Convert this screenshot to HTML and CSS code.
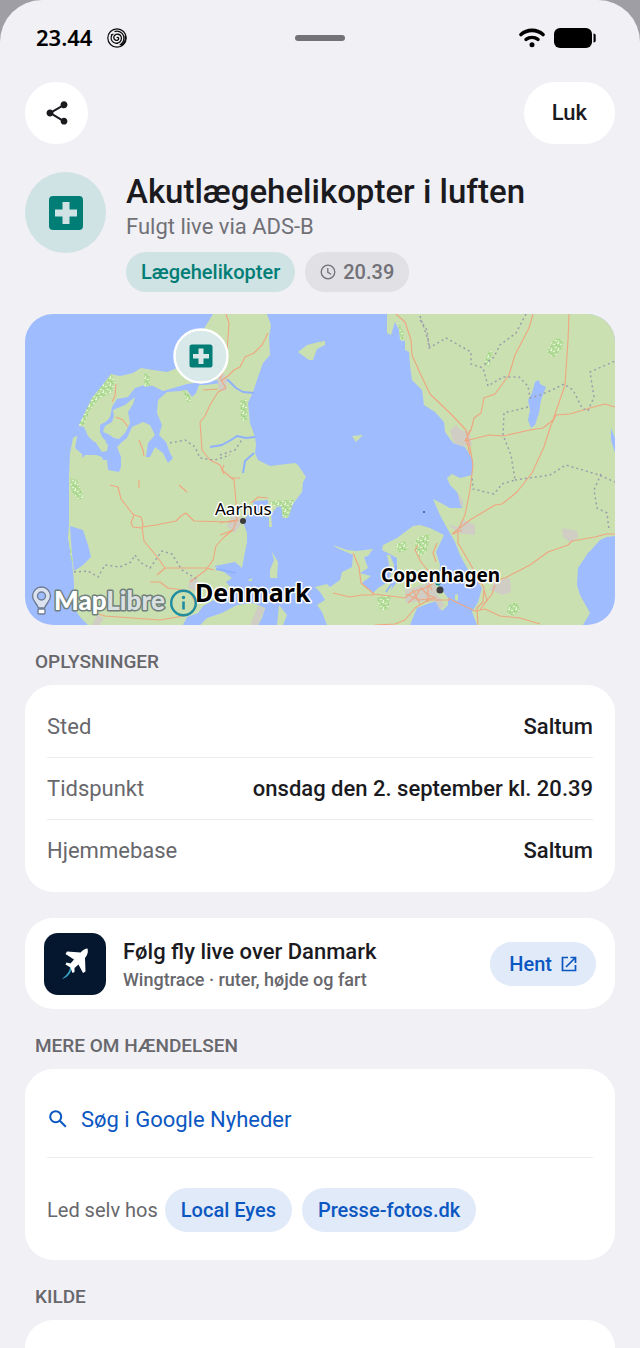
FILE: index.html
```html
<!DOCTYPE html>
<html lang="da">
<head>
<meta charset="utf-8">
<meta name="viewport" content="width=device-width, initial-scale=1">
<title>Akutlægehelikopter i luften</title>
<link rel="stylesheet" href="styles.css">
</head>
<body>
<div class="sheet">
  <div class="status">
    <div class="status-left">
      <span class="clock">23.44</span>
      <svg class="swirl" viewBox="0 0 20 20" fill="none" stroke="#0b0b0b" aria-hidden="true">
        <circle cx="10" cy="10" r="9.2" stroke-width="1.2"/>
        <path d="M10 10c.2-1 1.600-.8 1.700.4.1 1.600-1.700 2.500-3.200 1.800-2-.9-2.300-3.500-.7-5C9.600 5.500 12.900 6 14 8.300c1.200 2.700-.1 5.800-3 6.700-3.200.9-6.100-.9-6.800-3.800-.4-2-.1-3.300.9-4.700M4 7l2.500-1M7.500 3.600c3.700-1.200 7.700.4 9 3.900 1.400 3.800-.2 7.900-3.800 9.500" stroke-width="1.3"/>
        <path d="M18.300 7.500c.8 4-1 8.200-4.500 10" stroke-width="1.600"/>
      </svg>
    </div>
    <div class="handle"></div>
    <div class="status-right">
      <svg class="wifi" viewBox="0 0 26 20" fill="none" stroke="#000" stroke-linecap="round" aria-hidden="true">
        <path d="M2 6.500C8.200 1 17.800 1 24 6.500" stroke-width="3.600"/>
        <path d="M7 11.400c3.400-2.700 8.600-2.700 12 0" stroke-width="3.400"/>
        <circle cx="13" cy="16.800" r="2.500" fill="#000" stroke="none"/>
      </svg>
      <svg class="battery" viewBox="0 0 42 20" aria-hidden="true"><rect width="38" height="20" rx="6"/><path d="M39.500 5.500c1.500 0 2.200.8 2.200 2v5c0 1.200-.7 2-2.200 2z"/></svg>
    </div>
  </div>

  <div class="actions">
    <button class="round-btn share" aria-label="Del">
      <svg viewBox="0 0 24 24" fill="#1b1b1f"><path d="M18 16.080c-.76 0-1.440.3-1.960.77L8.910 12.700c.05-.23.09-.46.09-.7s-.04-.47-.09-.7l7.050-4.110c.54.5 1.250.81 2.040.81 1.660 0 3-1.340 3-3s-1.340-3-3-3-3 1.340-3 3c0 .24.04.47.09.7L8.040 9.810C7.500 9.310 6.790 9 6 9c-1.660 0-3 1.340-3 3s1.340 3 3 3c.79 0 1.500-.31 2.040-.81l7.120 4.160c-.05.21-.08.43-.08.65 0 1.610 1.310 2.920 2.920 2.920s2.920-1.310 2.920-2.920-1.310-2.920-2.920-2.920z"/></svg>
    </button>
    <button class="round-btn close">Luk</button>
  </div>

  <header class="head">
    <div class="head-icon">
      <svg viewBox="0 0 34 34" aria-hidden="true"><path fill="#007d75" fill-rule="evenodd" d="M4 0h26a4 4 0 0 1 4 4v26a4 4 0 0 1-4 4H4a4 4 0 0 1-4-4V4a4 4 0 0 1 4-4zM13.500 6v7.500H6v7h7.500V28h7v-7.500H28v-7h-7.500V6z"/></svg>
    </div>
    <div class="head-text">
      <h1>Akutlægehelikopter i luften</h1>
      <p class="sub">Fulgt live via ADS-B</p>
      <div class="tags">
        <span class="tag teal">Lægehelikopter</span>
        <span class="tag grey">
          <svg viewBox="0 0 16 16" fill="none" stroke="#707076" stroke-width="1.300" aria-hidden="true"><circle cx="8" cy="8" r="6.800"/><path d="M7.800 4v4.300l3.300 2"/></svg>20.39</span>
      </div>
    </div>
  </header>

  <div class="map">
    <svg viewBox="25 314 590 311" preserveAspectRatio="xMidYMid slice" role="img" aria-label="Kort over Danmark">
      <defs>
        <pattern id="wood" width="7" height="7" patternUnits="userSpaceOnUse">
          <rect width="7" height="7" fill="#b7dd9d"/>
          <path d="M0 1h2v1H0zM4 0h2v1H4zM2 4h2v1H2zM5 5h1v2H5z" fill="#e4f5d5"/><path d="M3 1h1v2H3zM0 5h1v1H0zM5 3h2v1H5z" fill="#9ad481"/>
        </pattern>
      </defs>
      <rect x="25" y="314" width="590" height="311" fill="#9fbcff"/>
      <g fill="#cbe0b0">
        <path d="M213 314L205 327 190 350 175 369 167 372 153 370 141 368 133 373 120 376 111 374 105 382 92 398 79 425 78 435 73 438 70 453 69 475 69 525 68 538 72 562 73 572 74 582 74 608 80 617 88 625H183L187 617 198 613 203 606 214 600 226 596 231 588 226 582 232 578 224 572 214 566 220 565 235 562 242 568 245 552 247 542 247 533 243 522 252 508 254 501 268 500 269 515 269 527 272 527 271 514 277 507 282 506 283 518 288 518 290 508 302 492 303 482 306 477 298 465 295 463 270 466 258 460 255 453 256 445 255 437 250 423 248 403 253 392 258 377 263 363 270 355 269 337 271 325 267 314Z"/>
        <path d="M207 618L222 613 237 605 253 603 265 608 262 618 258 625H200ZM279 605L287 615 283 625H277ZM270 545L272 552 278 562 277 578 270 578 270 570 274 560ZM247 581L252 578V581Z"/>
        <path d="M315 587L327 584 330 587 340 580 342 572 352 567 353 555 337 548 333 545 347 550 357 551 373 549 368 556 364 557 368 568 360 573 371 576 362 583 373 593 378 588 388 582 391 574 387 555 390 555 394 565 393 580 391 590 397 582 397 570 397 558 382 550 383 545 397 538 413 526 420 525 430 528 444 535 436 552 440 565 438 585 448 598 448 605 442 611 437 601 430 603 417 608 410 625H327L322 612 317 605 325 600 320 592Z"/>
        <path d="M387 314L387 333 391 335 395 322 399 330 400 340 405 341 405 350 409 352 410 365 412 380 422 390 424 405 435 412 444 422 445 432 453 443 465 447 473 460 472 475 460 478 452 474 447 478 450 485 457 492 463 502 462 508 450 508 437 501 433 499 440 515 447 528 455 542 460 555 467 568 475 577 482 588 478 602 472 612 477 625H583L590 613 580 595 577 585 578 568 588 553 592 549 600 540 607 537 615 536V314Z"/>
        <path d="M298 352L307 345 319 342 325 341 325 345 317 349 313 360 309 360ZM352 436L363 435 356 442ZM455 595L458 594 458 601 455 600Z"/>
      </g>
      <g fill="#9fbcff">
        <path d="M79 426L84 427 88 436 94 442 101 440 107 442 102 437 100 432 100 425 107 421 110 417 112 407 117 399 128 397 135 388 145 385 153 386 163 391 187 384 195 383 205 381 222 380 222 383 205 385 199 385 196 393 192 397 187 390 180 391 167 392 158 400 157 413 162 425 159 435 166 442 170 453 173 458 168 463 163 453 155 447 150 457 146 457 148 443 155 435 150 425 143 422 132 427 127 438 122 442 117 447 121 457 121 467 119 472 108 470 107 460 103 460 102 457 96 455 85 455 83 458 82 454 75 448Z"/>
        <path d="M70 526L83 530 88 545 91 557 83 565 74 571 72 555Z"/>
        <path d="M535 382L539 380 540 384 546 387 544 392 541 400 539 413 535 425 531 428 528 420 530 410 528 400 532 393ZM611 428L615 438V453L611 440ZM372 560L377 558 378 568 382 575 378 585 374 580 372 570Z"/>
      </g>
      <path fill="#cbe0b0" d="M113 410L125 405 135 397 133 404 128 412 130 423 125 433 119 439 114 438 108 434 103 432 105 426 112 422 114 416ZM94 440L102 438 108 445 107 451 102 452Z"/>
      <g fill="none" stroke="#8fb1fb" stroke-width="2" stroke-linejoin="round">
        <path d="M220 381L228 380 236 388 243 392 254 393M210 447L222 445 231 440 237 436 246 438 255 437M254 453L245 461 243 473M216 569L236 573"/>
        <path d="M386 592L394 580 396 566" stroke-width="1.500"/>
      </g>
      <g fill="#cfcdc4">
        <path d="M217 376L224 374 227 380 226 391 219 390ZM450 430L456 425 461 430 469 432 472 445 461 446 453 442ZM232 515L243 518 240 526 234 533 227 526ZM562 528L577 531 578 537 571 543 563 537ZM448 524L458 527 463 520 475 525 475 535 458 533ZM405 590L423 585 436 580 437 594 445 605 440 610 435 600 415 602 406 603ZM495 580L510 578 511 592 503 595 490 590ZM190 578L198 580 198 592 188 588ZM97 615L104 618 99 625H92ZM258 606L265 609 258 625H250ZM457 491L463 502 461 508Z"/>
      </g>
      <g fill="url(#wood)">
        <path d="M111 374L115 382 112 392 100 398 90 410 84 425 79 425 92 398 105 382ZM144 373L150 376 150 386 144 387ZM182 389L190 395 191 402 187 402ZM240 401L247 399 248 420 241 421ZM399 322L404 334 402 342 399 332ZM557 338L564 341 562 348 554 358 547 352 552 342ZM489 350L493 352 489 367 484 364ZM70 478L77 480 84 498 78 500 71 490ZM270 501L294 500 289 516 283 518 281 506 271 506ZM395 545L405 541 408 549 400 553ZM417 538L430 534 427 552 419 557 414 548ZM377 597L391 596 388 610 380 610ZM508 606L516 602 520 609 514 616 507 613ZM68 530L70 545 73 562 71 560Z"/>
      </g>
      <g fill="none" stroke="#eea680" stroke-width="1.100" stroke-linejoin="round">
        <path d="M226 314L229 323 228 338 227 350 226 366 220 378 226 388 218 392 210 405 205 416 200 422 202 450 210 460 220 465 224 474M268 333L262 345 254 353 245 357 240 367 234 370 228 376 221 381M203 390L218 389M116 384L115 396 112 402M116 417L123 420 128 427M139 440L143 450 144 456"/>
        <path d="M110 485L118 487 121 499 132 513 134 515 141 517 143 524 142 528 133 527 131 523 134 515M142 527L144 541 158 558 165 568H206L214 570M142 527L156 525 176 521 181 516 186 513 194 521 230 522 239 520M139 480V488M179 485L187 492M165 568L157 575M150 582L160 582 168 588 190 591 196 605 189 615 160 620 105 616 95 613M190 582L206 570 213 560 216 546 224 537 233 530M224 465L222 470 234 480 236 502 237 518 233 530 220 535M251 503L258 497 268 498M220 523L236 520M230 478L240 478"/>
        <path d="M353 553L359 567 361 583 374 594 398 597 405 598M333 593L350 597 362 595 374 595M375 625L395 624 405 620 415 608 428 600 450 600M418 545L415 550 421 562 430 573M437 543L433 553 436 562M405 598L412 592 425 588 434 583M408 603L416 596 421 588 428 595 436 598 419 600 406 594M413 590L420 604M428 585V602M425 575L432 590"/>
        <path d="M396 314L405 322 411 340 412 355 420 373 430 394 452 415 466 430 470 447 473 465 470 490 465 515 458 530 458 543 468 560 484 588 483 602 477 608 478 625M533 314L529 328 515 355 509 375 495 394 484 398 481 413 474 418 471 430 465 441 489 435 503 436 530 430 543 428 553 420 565 385 568 340 569 314M452 534L470 520 495 505 502 504 517 492 532 473 544 447 551 425 556 415 570 414 590 408 605 404 615 407M448 598L460 604 475 611 485 609 500 616 520 618 540 624M478 583L505 578 530 565 548 552 568 545 572 541 595 537 606 534 615 534M480 610L487 600 484 590M466 440L470 430M466 438L470 455M453 534L462 530M495 585L492 594 483 606"/>
      </g>
      <g fill="none" stroke="#9a9eab" stroke-width="1.500" stroke-dasharray="2 3">
        <path d="M420 320L427 330 429 348 446 338 471 352 471 364 483 368 488 386 503 377 519 377 528 386 530 398 540 395 552 390 564 384 573 390 582 408 588 411 594 397 590 372 606 365 615 361M526 314L516 333 500 345 494 357 484 365M528 407L504 413 503 435 511 455 515 480 502 484 494 494 473 489 472 477M515 480L550 475 566 465 599 475 615 482M601 474L594 490 597 508 607 513 609 530M420 316L428 340 430 348M170 443L185 440 195 447 200 458 215 460 230 455M220 455L235 450 243 438M74 572L88 571 98 577 105 565 120 567 131 562 135 555 140 562 150 568 162 551 172 554 182 570 198 580"/>
      </g>
      <circle cx="424" cy="512" r="1" fill="#39538c"/>
      <circle cx="438" cy="583" r="2.500" fill="#0d8c80"/>
      <circle cx="243" cy="521" r="3" fill="#3c3c3c"/>
      <circle cx="440" cy="590" r="3.500" fill="#3c3c3c"/>
      <g class="place">
        <text x="215" y="515" font-size="17">Aarhus</text>
        <text x="381" y="582" font-size="19" font-weight="700">Copenhagen</text>
        <text x="195" y="602" font-size="25" font-weight="700">Denmark</text>
      </g>
      <g stroke="#6f7c91" stroke-width="1.400" fill="#dce3f0">
        <path fill-rule="evenodd" d="M41.500 587a9 9 0 0 1 9 9c0 5-4 7-6 12h-6c-2-5-6-7-6-12a9 9 0 0 1 9-9zm0 5a4 4 0 1 0 0 8 4 4 0 0 0 0-8z"/>
        <rect x="38" y="609" width="7" height="5" rx="1" fill="#fff"/>
      </g>
      <text class="brand" x="54" y="610" font-size="26"><tspan fill="#fff">Map</tspan><tspan fill="#dadfe0">Libre</tspan></text>
      <circle cx="183.500" cy="603" r="12.300" fill="none" stroke="#1f8ca0" stroke-width="2.400"/>
      <path d="M183.500 601.500v8" fill="none" stroke="#1f8ca0" stroke-width="2.600"/>
      <circle cx="183.500" cy="597.500" r="1.700" fill="#1f8ca0"/>
      <circle cx="201" cy="356" r="26.500" fill="#d9e9ea" stroke="#fff" stroke-width="2.400"/>
      <path fill="#007d75" fill-rule="evenodd" d="M192 344.500h18a2.500 2.500 0 0 1 2.500 2.500v18a2.500 2.500 0 0 1-2.500 2.500h-18a2.500 2.500 0 0 1-2.500-2.500v-18a2.500 2.500 0 0 1 2.500-2.500zM198.500 348.500v5.500H193v4.500h5.500v5.500h5v-5.500h5.500V354h-5.500v-5.500z"/>
    </svg>
  </div>

  <h2>OPLYSNINGER</h2>
  <dl class="card facts">
    <div class="fact"><dt>Sted</dt><dd>Saltum</dd></div>
    <div class="fact"><dt>Tidspunkt</dt><dd>onsdag den 2. september kl. 20.39</dd></div>
    <div class="fact"><dt>Hjemmebase</dt><dd>Saltum</dd></div>
  </dl>

  <div class="card promo">
    <svg class="app" viewBox="0 0 62 62" aria-hidden="true">
      <rect width="62" height="62" rx="14" fill="#04172f"/>
      <path d="M25 30C28 36 24 41 18 46c5-1 9-6 10-11l3-2z" fill="#38a3c4"/>
      <path d="M43.500 15.500c-2 0-4.500 1.500-7 4L23 18.500l-1.500 2.500 8.500 5.500-3.500 4-4-1-1 2 5 3 2 5.500 2-1V35l4-3.500 4.500 8.500 2.500-1.500-.5-13.500c2.500-3 3.500-6 2.500-9.500z" fill="#fff"/>
    </svg>
    <div class="promo-text">
      <strong>Følg fly live over Danmark</strong>
      <span>Wingtrace · ruter, højde og fart</span>
    </div>
    <a class="pill get" href="#hent">Hent
      <svg viewBox="0 0 16 16" fill="none" stroke="#0b57c2" stroke-width="1.700" aria-hidden="true"><path d="M7 1.500H1.500v13h13V9M9.500 1.500h5V7M14.500 1.500L5 11"/></svg></a>
  </div>

  <h2>MERE OM HÆNDELSEN</h2>
  <div class="card more">
    <a class="search" href="#nyheder">
      <svg viewBox="0 0 18 18" fill="none" stroke="#0b57c2" stroke-width="2" aria-hidden="true"><circle cx="6.700" cy="6.700" r="5.500"/><path d="M10.800 10.800l6 6"/></svg>Søg i Google Nyheder</a>
    <div class="sources">
      <span class="lead">Led selv hos</span>
      <div class="links">
        <a class="pill" href="#local-eyes">Local Eyes</a>
        <a class="pill" href="#presse-fotos">Presse-fotos.dk</a>
      </div>
    </div>
  </div>

  <h2>KILDE</h2>
  <div class="card source"></div>
</div>
</body>
</html>
```
FILE: styles.css
```css
* { box-sizing: border-box; }
body {
  margin: 0;
  background: #9e9ea4;
  color: #1b1b1f;
  font-family: Roboto, "Noto Sans", sans-serif;
  font-size: 22px;
}
h1, h2, p, dl, dd { margin: 0; }
svg { display: block; flex: none; }
a { color: #0b57c2; text-decoration: none; }

.sheet {
  display: flex;
  flex-direction: column;
  min-height: 100vh;
  padding: 0 25px;
  background: #f1f0f5;
  border-radius: 42px 42px 0 0;
}

.status {
  display: grid;
  grid-template-columns: 1fr auto 1fr;
  align-items: center;
  height: 76px;
}
.status-left, .status-right { display: flex; align-items: center; }
.status-left { gap: 15px; padding-left: 11px; }
.status-right { justify-content: flex-end; gap: 9px; padding-right: 19px; }
.clock { color: #000; font: 600 22px/30px "Noto Sans", sans-serif; padding-bottom: 2px; }
.swirl { width: 20px; height: 20px; }
.wifi { width: 26px; height: 20px; }
.battery { width: 42px; height: 20px; }
.handle { width: 50px; height: 6px; border-radius: 3px; background: #727277; }

.actions { display: flex; justify-content: space-between; padding: 6px 0 28px; }
.round-btn {
  display: flex;
  align-items: center;
  justify-content: center;
  height: 62px;
  padding: 0;
  border: 0;
  border-radius: 31px;
  background: #fff;
  color: #1b1b1f;
  font: 500 22px/28px Roboto, sans-serif;
}
.share { width: 63px; }
.share svg { width: 28px; height: 28px; }
.close { padding: 0 28px; }

.head { display: flex; gap: 20px; padding-bottom: 22px; }
.head-icon {
  display: flex;
  flex: none;
  align-items: center;
  justify-content: center;
  width: 81px;
  height: 81px;
  border-radius: 50%;
  background: #cfe2e4;
}
.head-icon svg { width: 34px; height: 34px; }
h1 { font-size: 33px; font-weight: 500; line-height: 40px; }
.sub { color: #707076; line-height: 30px; }
.tags { display: flex; gap: 10px; padding-top: 10px; }
.tag {
  display: flex;
  align-items: center;
  gap: 7px;
  height: 40px;
  padding: 0 15px;
  border-radius: 20px;
  font-size: 20px;
  font-weight: 500;
}
.tag svg { width: 16px; height: 16px; }
.teal { background: #cfe2e4; color: #007d75; }
.grey { background: #e1e0e5; color: #707076; }

.map { overflow: hidden; border-radius: 28px; }
.map svg { width: 100%; height: auto; }
.place {
  font-family: "Noto Sans", sans-serif;
  stroke: #fff;
  stroke-width: 3px;
  stroke-linejoin: round;
  paint-order: stroke;
}
.brand {
  font-family: Lato, sans-serif;
  font-weight: 900;
  stroke: #6f7f7c;
  stroke-width: 3px;
  stroke-linejoin: round;
  paint-order: stroke;
}

h2 {
  padding: 26px 10px 12px;
  color: #67676c;
  font-size: 19px;
  font-weight: 500;
  line-height: 22px;
}

.card { border-radius: 28px; background: #fff; }
.facts { padding: 11px 22px; }
.fact {
  display: flex;
  align-items: center;
  justify-content: space-between;
  height: 62px;
  border-bottom: 1px solid #ececef;
}
.fact:last-child { height: 61px; border: 0; }
dt { color: #67676c; }
dd { font-weight: 500; }

.promo {
  display: flex;
  align-items: center;
  gap: 17px;
  min-height: 91px;
  margin-top: 26px;
  padding: 0 19px;
}
.app { width: 62px; height: 62px; }
.promo-text { display: flex; flex: 1; flex-direction: column; padding-top: 2px; }
.promo-text strong { font-size: 22px; font-weight: 500; line-height: 30px; }
.promo-text span { color: #67676c; font-size: 18px; font-weight: 500; line-height: 26px; }
.pill {
  display: flex;
  align-items: center;
  gap: 9px;
  height: 44px;
  padding: 0 16px;
  border-radius: 22px;
  background: #e1eaf8;
  font-size: 20px;
  font-weight: 500;
}
.get { padding: 0 19px; }
.pill svg { width: 16px; height: 16px; }

.more { padding: 0 22px; }
.search {
  display: flex;
  align-items: center;
  gap: 14px;
  height: 89px;
  padding: 12px 2px 0;
  border-bottom: 1px solid #ececef;
}
.search svg { width: 18px; height: 18px; }
.sources { display: flex; align-items: center; gap: 7px; padding: 30px 0 28px; }
.links { display: flex; gap: 10px; }
.lead { color: #67676c; font-size: 20px; }

.source { flex: 1; min-height: 28px; border-radius: 28px 28px 0 0; }
```
